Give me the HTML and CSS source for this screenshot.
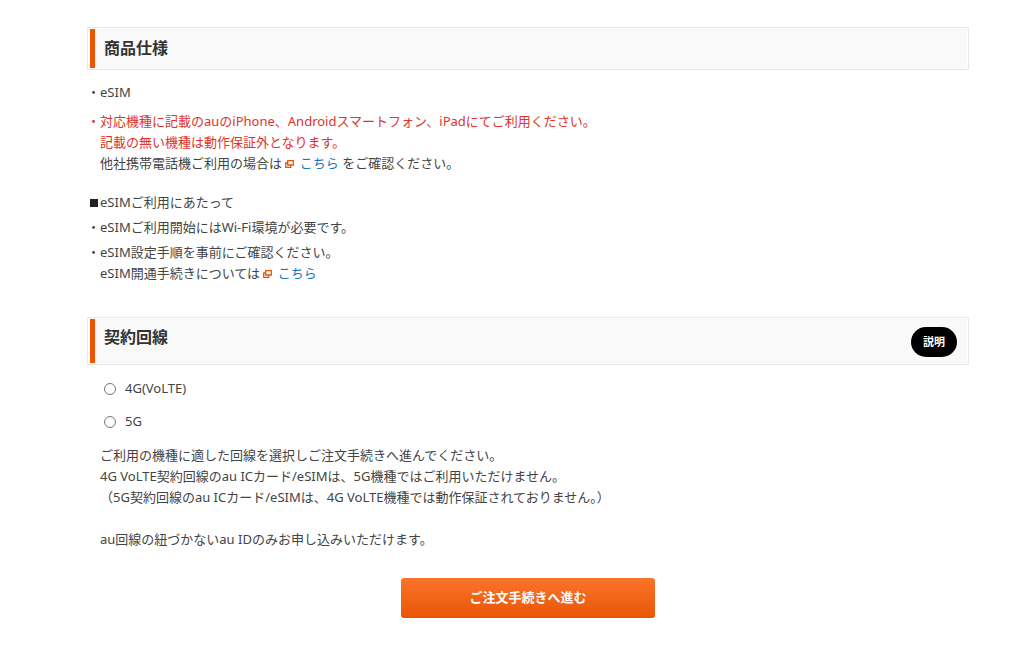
FILE: index.html
```
<!DOCTYPE html>
<html lang="ja">
<head>
    <meta charset="UTF-8">
    <meta name="viewport" content="width=device-width, initial-scale=1.0">
    <title>商品仕様</title>
    <link rel="stylesheet" href="styles.css">
</head>
<body>
    <main class="contents">
        <section class="spec">
            <div class="heading">
                <div class="heading-inner"><h2>商品仕様</h2></div>
            </div>
            <ul class="notes">
                <li>eSIM</li>
            </ul>
            <ul class="notes">
                <li class="important">
                    <span class="attention">対応機種に記載のauのiPhone、Androidスマートフォン、iPadにてご利用ください。<br>記載の無い機種は動作保証外となります。</span><br>
                    他社携帯電話機ご利用の場合は
                    <svg class="blank" viewBox="0 0 9 8" aria-hidden="true"><path d="M2.7.7h5.6v4.3H2.7zM2.7 3H.7v4.3h5V5"/></svg>
                    <a href="#">こちら</a> をご確認ください。
                </li>
            </ul>
            <h3 class="notes-title">eSIMご利用にあたって</h3>
            <ul class="notes">
                <li>eSIMご利用開始にはWi-Fi環境が必要です。</li>
                <li>
                    eSIM設定手順を事前にご確認ください。<br>
                    eSIM開通手続きについては
                    <svg class="blank" viewBox="0 0 9 8" aria-hidden="true"><path d="M2.7.7h5.6v4.3H2.7zM2.7 3H.7v4.3h5V5"/></svg>
                    <a href="#">こちら</a>
                </li>
            </ul>
        </section>

        <form class="line">
            <div class="heading">
                <div class="heading-inner">
                    <h2>契約回線</h2>
                    <button type="button" class="help">説明</button>
                </div>
            </div>
            <div class="options">
                <label for="line4g"><input type="radio" name="line" id="line4g" value="4g">4G(VoLTE)</label>
                <label for="line5g"><input type="radio" name="line" id="line5g" value="5g">5G</label>
            </div>
            <div class="description">
                <p>
                    ご利用の機種に適した回線を選択しご注文手続きへ進んでください。<br>
                    4G VoLTE契約回線のau ICカード/eSIMは、5G機種ではご利用いただけません。<br>
                    （5G契約回線のau ICカード/eSIMは、4G VoLTE機種では動作保証されておりません。）
                </p>
                <p>au回線の紐づかないau IDのみお申し込みいただけます。</p>
            </div>
            <button type="submit" class="order">ご注文手続きへ進む</button>
        </form>
    </main>
</body>
</html>
```

FILE: styles.css
```
* {
    box-sizing: border-box;
}
body {
    margin: 0;
    background: #fff;
    color: #444;
    font-family: "Noto Sans", "Noto Sans CJK JP", sans-serif;
    font-size: 13px;
    line-height: 21px;
}
h2, h3, p, ul {
    margin: 0;
    padding: 0;
}
a {
    color: #1a75bb;
    text-decoration: none;
}
a:hover {
    text-decoration: underline;
}
.contents {
    margin: 27px 55px 30px 87px;
}
.heading {
    padding: 1px;
    border: 1px solid #e9e9e9;
}
.heading-inner {
    display: flex;
    justify-content: space-between;
    align-items: flex-start;
    padding: 9px 10px 9px 9px;
    margin-left: 1px;
    border-left: 5px solid #eb5505;
    background: #f9f9f9;
}
.heading h2 {
    color: #333;
    font-size: 16px;
    line-height: 21px;
}
.spec .heading {
    margin-bottom: 12px;
}
.notes {
    list-style: none;
}
.notes li {
    position: relative;
    padding-left: 13px;
    margin-bottom: 4px;
}
.notes li::before {
    content: "・";
    position: absolute;
    left: 0;
}
.notes + .notes {
    margin-top: 8px;
}
.notes .important::before,
.attention {
    color: #e0332c;
}
.notes-title {
    margin: 18px 0 4px;
    font-size: 13px;
    font-weight: normal;
}
.notes-title::before {
    content: "";
    display: inline-block;
    width: 8px;
    height: 8px;
    margin: 0 2px 0 3px;
    background: #222;
}
.blank {
    width: 9px;
    height: 8px;
    margin-right: 2px;
    fill: none;
    stroke: #eb5505;
    stroke-width: 1.3;
}
.line .heading {
    margin-top: 33px;
}
.line .heading-inner {
    padding-top: 8px;
    padding-bottom: 6px;
}
.help {
    padding: 0 12px;
    border: 0;
    border-radius: 15px;
    background: #000;
    color: #fff;
    font-family: inherit;
    font-size: 11px;
    font-weight: bold;
    line-height: 30px;
    cursor: pointer;
}
.options {
    display: flex;
    flex-direction: column;
    align-items: flex-start;
    gap: 12px;
    margin: 13px 0 0 17px;
}
.options label {
    display: flex;
    align-items: center;
    gap: 9px;
}
.options input {
    width: 12px;
    height: 12px;
    margin: 0;
}
.description {
    margin: 13px 0 28px 13px;
}
.description p + p {
    margin-top: 21px;
}
.order {
    display: block;
    width: 254px;
    height: 40px;
    margin: 0 auto;
    padding: 0 0 3px;
    border: 0;
    border-radius: 3px;
    background: linear-gradient(#fa742b, #e95504);
    color: #fff;
    font-family: inherit;
    font-size: 13px;
    font-weight: bold;
    cursor: pointer;
}
```
